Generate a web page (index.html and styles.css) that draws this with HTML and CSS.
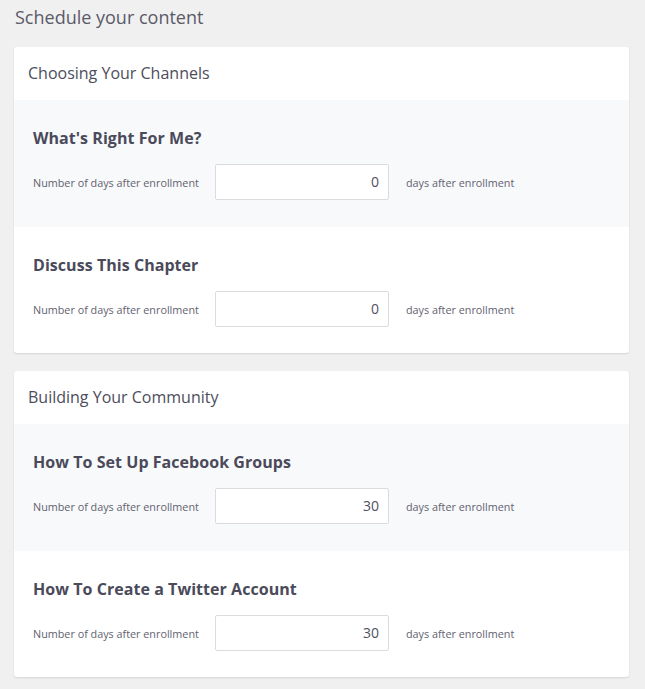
FILE: index.html
```html
<!DOCTYPE html>
<html>
<head>
<meta charset="utf-8">
<link rel="stylesheet" href="styles.css">
</head>
<body>
<div class="page">
  <h1 class="title">Schedule your content</h1>

  <div class="card">
    <div class="card-header">Choosing Your Channels</div>
    <div class="section alt">
      <h2 class="section-title">What's Right For Me?</h2>
      <div class="row">
        <span class="label">Number of days after enrollment</span>
        <input class="days" type="text" value="0">
        <span class="suffix">days after enrollment</span>
      </div>
    </div>
    <div class="section">
      <h2 class="section-title">Discuss This Chapter</h2>
      <div class="row">
        <span class="label">Number of days after enrollment</span>
        <input class="days" type="text" value="0">
        <span class="suffix">days after enrollment</span>
      </div>
    </div>
  </div>

  <div class="card">
    <div class="card-header">Building Your Community</div>
    <div class="section alt">
      <h2 class="section-title">How To Set Up Facebook Groups</h2>
      <div class="row">
        <span class="label">Number of days after enrollment</span>
        <input class="days" type="text" value="30">
        <span class="suffix">days after enrollment</span>
      </div>
    </div>
    <div class="section">
      <h2 class="section-title">How To Create a Twitter Account</h2>
      <div class="row">
        <span class="label">Number of days after enrollment</span>
        <input class="days" type="text" value="30">
        <span class="suffix">days after enrollment</span>
      </div>
    </div>
  </div>
</div>
</body>
</html>
```

FILE: styles.css
```css
html, body {
  margin: 0;
  padding: 0;
  background: #f0f0f0;
  font-family: "Open Sans", "Noto Sans", sans-serif;
  color: #4d4d5c;
}

.page {
  padding: 5px 16px 12px 14px;
}

.title {
  margin: 0 0 18px 1px;
  font-size: 18px;
  line-height: 24px;
  font-weight: 400;
  color: #5a5a68;
}

.card {
  background: #fff;
  border-radius: 3px;
  box-shadow: 0 1px 2px rgba(0, 0, 0, 0.12);
  margin-bottom: 18px;
  overflow: hidden;
}

.card-header {
  box-sizing: border-box;
  height: 53px;
  padding: 0 0 2px 14px;
  display: flex;
  align-items: center;
  font-size: 16px;
  color: #4d4d5c;
}

.section {
  padding: 27px 19px 27px;
  height: 72px;
}

.section.alt {
  background: #f8f9fb;
  height: 73px;
}

.section-title {
  margin: 0 0 15px;
  font-size: 16px;
  line-height: 22px;
  font-weight: 700;
  letter-spacing: 0.05px;
  color: #4a4a5a;
}

.row {
  display: flex;
  align-items: center;
}

.label, .suffix {
  font-size: 10.8px;
  color: #62626f;
}

.label {
  width: 182px;
}

.days {
  box-sizing: border-box;
  width: 174px;
  height: 36px;
  border: 1px solid #dcdcdf;
  border-radius: 2px;
  background: #fff;
  text-align: right;
  padding: 0 9px 2px 0;
  font-family: "Open Sans", "Noto Sans", sans-serif;
  font-size: 14px;
  color: #505060;
  margin: 0;
}

.suffix {
  margin-left: 17px;
}
```
